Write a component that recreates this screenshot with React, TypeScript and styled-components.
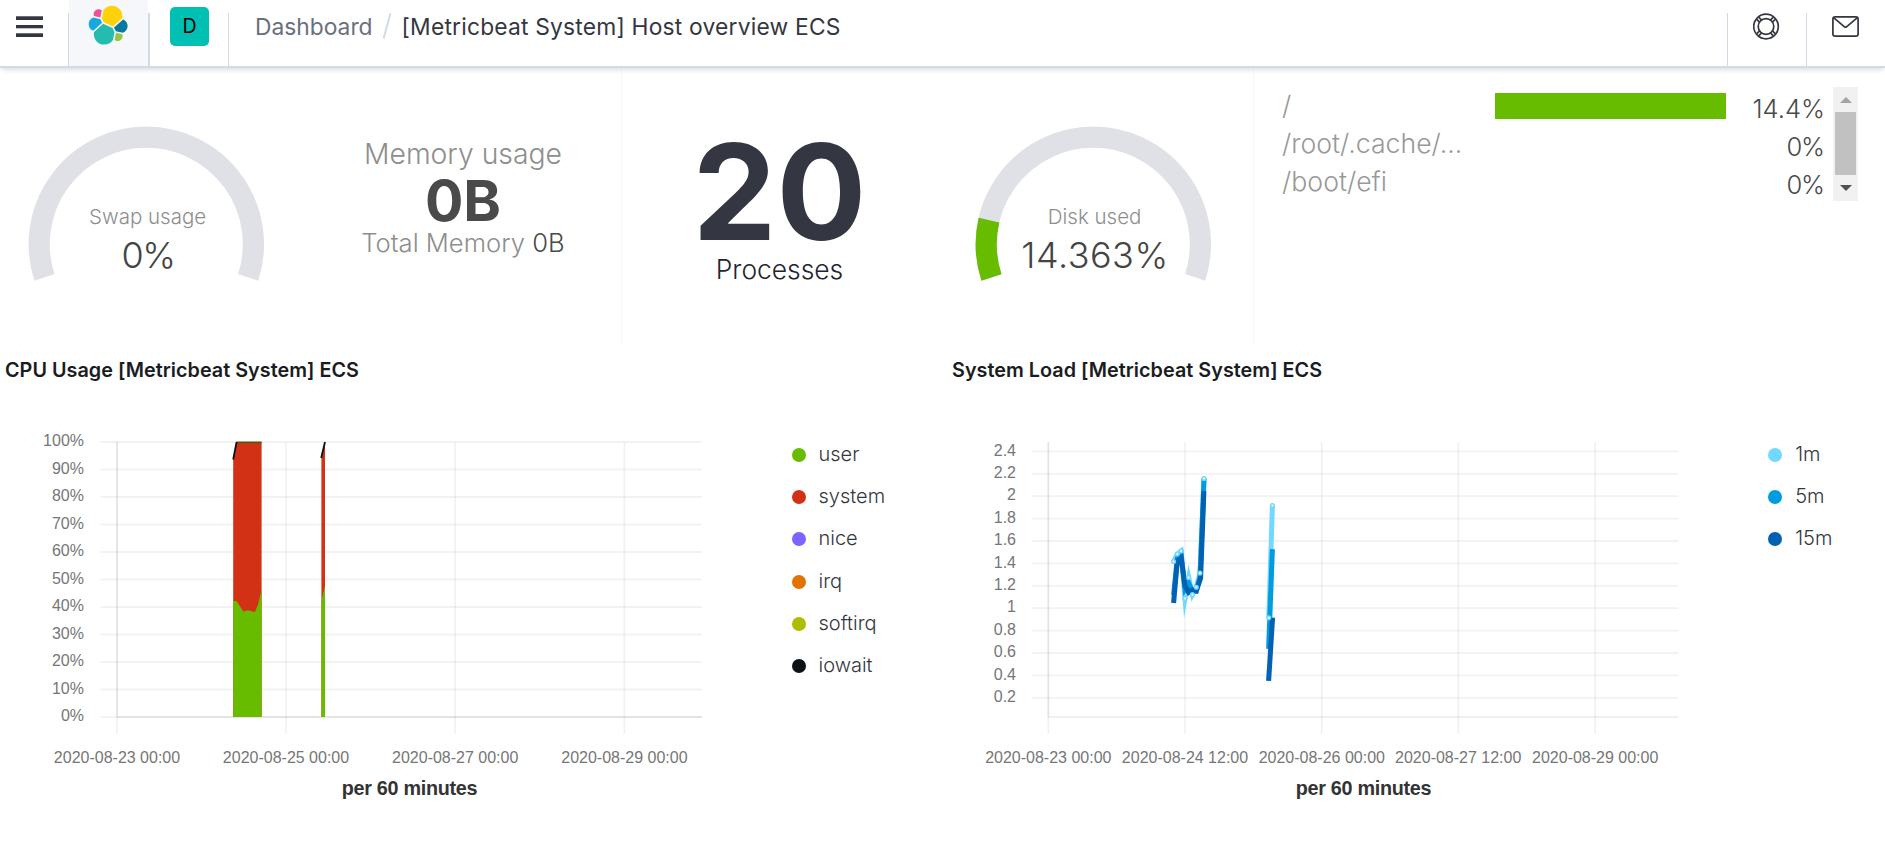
import React from 'react';
import styled, { createGlobalStyle } from 'styled-components';

const INTER = 'Inter, "Liberation Sans", sans-serif';
const ARIAL = '"Liberation Sans", Arial, sans-serif';

const GlobalStyle = createGlobalStyle`
  * { box-sizing: border-box; }
  body { margin: 0; background: #fff; overflow: hidden; font-family: ${INTER}; color: #343741; }
  svg { display: block; }
`;

const Page = styled.div`
  width: 1885px;
  height: 844px;
  display: flex;
  flex-direction: column;
  overflow: hidden;
`;

/* ---------- header ---------- */

const Header = styled.header`
  position: relative;
  z-index: 1;
  display: flex;
  flex: none;
  height: 68px;
  border-bottom: 2px solid #d3dae6;
  box-shadow: 0 2px 4px -1px rgba(152, 162, 179, 0.25), 0 5px 6px -3px rgba(152, 162, 179, 0.2);
  background: #fff;
`;

const HeaderCell = styled.div<{ $width: number; $top: number; $left: number; $tint?: boolean }>`
  width: ${(p) => p.$width}px;
  padding: ${(p) => p.$top}px 0 0 ${(p) => p.$left}px;
  background: ${(p) => (p.$tint ? '#f5f7fa' : 'transparent')};
`;

const HeaderRule = styled.div<{ $width?: number }>`
  width: ${(p) => p.$width ?? 1}px;
  margin-top: 13px;
  background: #d3dae6;
`;

const MenuButton = styled.div`
  display: flex;
  flex-direction: column;
  justify-content: space-between;
  width: 27px;
  height: 21px;
`;

const MenuBar = styled.span<{ $soft?: boolean }>`
  height: 4px;
  background: #343741;
  border-top: ${(p) => (p.$soft ? '0' : '1px solid #6c6e76')};
  border-bottom: ${(p) => (p.$soft ? '1px solid #c2c3c6' : '0')};
`;

const SpaceAvatar = styled.div`
  display: flex;
  align-items: center;
  justify-content: center;
  width: 39px;
  height: 39px;
  border-radius: 5px;
  background: #00bfb3;
  color: #000;
  font-size: 19.5px;
  line-height: 39px;
`;

const Breadcrumbs = styled.nav`
  display: flex;
  flex: 1;
  padding: 9px 0 0 26px;
  font-size: 22.8px;
  line-height: 36px;
  white-space: nowrap;
`;

const Crumb = styled.span<{ $current?: boolean }>`
  color: ${(p) => (p.$current ? '#343741' : '#69707d')};
  letter-spacing: ${(p) => (p.$current ? 0.2 : 0)}px;
`;

const CrumbSlash = styled.span`
  width: 2px;
  height: 26px;
  margin: 4px 14px 0 13px;
  background: #d3dae6;
  transform: rotate(15deg);
`;

/* ---------- metric row ---------- */

const MetricRow = styled.section`
  display: grid;
  flex: none;
  grid-template-columns: 305px 316px 316px 316px 1fr;
  height: 278px;
`;

const MetricPanel = styled.div<{ $top: number; $right?: number; $rule?: boolean }>`
  display: flex;
  flex-direction: column;
  align-items: center;
  padding: ${(p) => p.$top}px ${(p) => p.$right ?? 0}px 0 0;
  border-left: ${(p) => (p.$rule ? '1px solid #f8f9fb' : '0')};
  white-space: nowrap;
`;

const MetricLabel = styled.div<{ $size: number }>`
  font-size: ${(p) => p.$size}px;
  font-weight: 300;
  line-height: 34px;
  color: #8e8e8e;
`;

const MetricValue = styled.div`
  font-size: 57px;
  font-weight: 700;
  line-height: 55px;
  padding-top: 2px;
  margin-bottom: -2px;
  color: #4a4a4a;
`;

const Strong = styled.span`
  color: #4a4a4a;
`;

const BigNumber = styled.div`
  font-size: 133.3px;
  font-weight: 700;
  line-height: 134px;
  color: #343741;
`;

const BigCaption = styled.div`
  margin-top: -7px;
  font-size: 26.4px;
  font-weight: 300;
  line-height: 34px;
  color: #22252c;
`;

const TopList = styled.div`
  display: flex;
  padding: 19px 27px 0 28px;
  border-left: 1px solid #f8f9fb;
`;

const TopRows = styled.div`
  flex: 1;
`;

const TopRow = styled.div`
  display: grid;
  grid-template-columns: 213px 231px 1fr;
  height: 38px;
  font-size: 26.67px;
  font-weight: 300;
`;

const TopName = styled.span`
  line-height: 36px;
  color: #999;
  white-space: nowrap;
`;

const TopBar = styled.span<{ $filled: boolean }>`
  height: 26px;
  margin-top: 6px;
  background: ${(p) => (p.$filled ? '#68bc00' : 'transparent')};
`;

const TopValue = styled.span<{ $tight: boolean }>`
  font-size: 25.6px;
  line-height: 44px;
  letter-spacing: ${(p) => (p.$tight ? -1.2 : 0)}px;
  padding-right: ${(p) => (p.$tight ? 9.2 : 8)}px;
  text-align: right;
  color: #4a4a4a;
`;

const ScrollTrack = styled.div`
  display: flex;
  flex-direction: column;
  align-items: center;
  width: 25px;
  height: 114px;
  background: #f1f1f1;
`;

const ScrollArrow = styled.div<{ $down?: boolean }>`
  width: 0;
  height: 0;
  margin: ${(p) => (p.$down ? '10px 0 0' : '10px 0 9px')};
  border-left: 6px solid transparent;
  border-right: 6px solid transparent;
  border-top: ${(p) => (p.$down ? '6px solid #505050' : '0')};
  border-bottom: ${(p) => (p.$down ? '0' : '6px solid #a3a3a3')};
`;

const ScrollThumb = styled.div`
  width: 21px;
  height: 63px;
  background: #c1c1c1;
`;

/* ---------- chart row ---------- */

const ChartRow = styled.section`
  display: grid;
  grid-template-columns: 947px 1fr;
  flex: 1;
`;

const ChartPanel = styled.article`
  display: flex;
  flex-direction: column;
`;

const ChartTitle = styled.h2`
  margin: 0;
  padding: 9px 0 0 5px;
  font-size: 19.8px;
  font-weight: 600;
  line-height: 30px;
  letter-spacing: 0.03px;
  color: #1a1c21;
  white-space: nowrap;
`;

const ChartBody = styled.div`
  display: flex;
`;

const Legend = styled.ul<{ $gap: number }>`
  margin: 0;
  padding: 49px 0 0 ${(p) => p.$gap}px;
  list-style: none;
`;

const LegendItem = styled.li`
  display: flex;
  align-items: center;
  height: 42.2px;
  font-size: 20px;
  font-weight: 300;
  color: #343741;
  white-space: nowrap;
`;

const LegendDot = styled.span<{ $color: string }>`
  width: 14px;
  height: 14px;
  margin-right: 13px;
  border-radius: 50%;
  background: ${(p) => p.$color};
`;

const LegendText = styled.span`
  padding-bottom: 2px;
`;

const AxisText = styled.text`
  font-family: ${ARIAL};
  font-size: 16px;
  fill: #767676;
`;

const AxisTitle = styled.text`
  font-family: ${ARIAL};
  font-size: 19.8px;
  font-weight: 700;
  letter-spacing: -0.3px;
  fill: #333;
`;

const GaugeLabel = styled.text`
  font-family: ${INTER};
  font-size: 20.5px;
  font-weight: 300;
  fill: #8e8e8e;
`;

const GaugeValue = styled.text<{ $spacing: number }>`
  font-family: ${INTER};
  font-size: 36px;
  font-weight: 300;
  letter-spacing: ${(p) => p.$spacing}px;
  fill: #444;
`;

/* ---------- icons ---------- */

const ElasticLogo = () => (
  <svg width="42.3" height="42.3" viewBox="0 0 32 32">
    <path fill="#FED10A" d="M12.58 13.787l7.002 3.211 7.066-6.213c.103-.513.152-1.03.152-1.556a7.87 7.87 0 00-7.847-7.879 7.838 7.838 0 00-6.476 3.43l-1.176 6.115 1.279 2.892z" />
    <path fill="#24BBB1" d="M5.333 21.228A8.018 8.018 0 005.18 22.8c0 4.368 3.541 7.922 7.894 7.922 2.623 0 5.079-1.307 6.552-3.49l1.167-6.11-1.557-2.992-7.027-3.216-6.876 6.314z" />
    <path fill="#EF5098" d="M5.288 9.067l4.8 1.137L11.14 4.73a3.82 3.82 0 00-2.3-.77c-2.09 0-3.79 1.707-3.79 3.804 0 .46.08.903.238 1.303z" />
    <path fill="#17A8E0" d="M4.872 10.214c-2.145.713-3.605 2.768-3.605 5.04 0 2.21 1.364 4.184 3.411 4.966l6.734-6.115-1.236-2.654-5.304-1.237z" />
    <path fill="#93C83E" d="M20.873 27.228a3.8 3.8 0 002.292.774c2.09 0 3.79-1.706 3.79-3.803 0-.461-.08-.904-.238-1.304l-4.796-1.127-1.048 5.46z" />
    <path fill="#0779A1" d="M21.848 20.528l5.28 1.24c2.145-.713 3.606-2.767 3.606-5.041 0-2.206-1.367-4.178-3.416-4.959l-6.905 6.082 1.435 2.678z" />
  </svg>
);

const HelpIcon = () => (
  <svg width="27" height="27" viewBox="0 0 27 27" fill="none" stroke="#343741" strokeWidth="1.7">
    <circle cx="13" cy="13.5" r="12.3" />
    <circle cx="13" cy="13.5" r="7.8" />
    <g strokeWidth="1.7">
      <path d="M3.8 6.4l3 3M5.9 4.3l3 3M20.1 4.3l-3 3M22.2 6.4l-3 3M3.8 20.6l3-3M5.9 22.7l3-3M20.1 22.7l-3-3M22.2 20.6l-3-3" />
    </g>
  </svg>
);

const MailIcon = () => (
  <svg width="27" height="21" viewBox="0 0 27 21" fill="none" stroke="#343741" strokeWidth="1.7">
    <rect x="0.9" y="0.9" width="25.2" height="19.2" rx="2.2" />
    <path d="M1.6 1.6l10.9 9.2q1 .8 2 0L25.4 1.6" />
  </svg>
);

/* ---------- gauge ---------- */

const SWEEP = 216;
const point = (angle: number, r: number) => {
  const a = (angle * Math.PI) / 180;
  return `${(120.3 + r * Math.cos(a)).toFixed(2)} ${(120.3 + r * Math.sin(a)).toFixed(2)}`;
};
const arc = (from: number, to: number) =>
  `M${point(from, 107.1)}A107.1 107.1 0 ${to - from > 180 ? 1 : 0} 1 ${point(to, 107.1)}`;

type GaugeProps = { label: string; value: string; ratio: number; spacing: number };

const Gauge = ({ label, value, ratio, spacing }: GaugeProps) => (
  <svg width="240" height="164" viewBox="0 0 240 164" fill="none" strokeWidth="21.2">
    <path d={arc(162, 162 + SWEEP)} stroke="#e0e1e6" />
    {ratio > 0 && <path d={arc(162, 162 + SWEEP * ratio)} stroke="#68bc00" />}
    <GaugeLabel x="121.6" y="100" textAnchor="middle">{label}</GaugeLabel>
    <GaugeValue $spacing={spacing} x="122" y="143.6" textAnchor="middle">{value}</GaugeValue>
  </svg>
);

/* ---------- charts ---------- */

type Tick = { at: number; label: string };
type ChartFrameProps = {
  width: number;
  left: number;
  right: number;
  labelRight: number;
  yTicks: Tick[];
  xTicks: Tick[];
  titleX: number;
  children: React.ReactNode;
};

const TOP = 57;
const BOTTOM = 332;

const ChartFrame = ({ width, left, right, labelRight, yTicks, xTicks, titleX, children }: ChartFrameProps) => (
  <svg width={width} height="440" viewBox={`0 0 ${width} 440`}>
    <g stroke="#000" strokeOpacity="0.05" strokeWidth="1.8">
      {yTicks.map((t) => (
        <path key={t.label} d={`M${left - 16.5} ${t.at}H${right}`} />
      ))}
      {xTicks.map((t) => (
        <path key={t.label} d={`M${t.at} ${TOP}V349`} />
      ))}
    </g>
    <g stroke="#000" strokeOpacity="0.06" strokeWidth="1.8">
      <path d={`M${left} ${TOP}V${BOTTOM}`} />
      <path d={`M${left} ${BOTTOM}H${right}`} />
    </g>
    {children}
    {yTicks.map((t) => (
      <AxisText key={t.label} x={labelRight} y={t.at + 4.2} textAnchor="end">{t.label}</AxisText>
    ))}
    {xTicks.map((t) => (
      <AxisText key={t.label} x={t.at} y="377.7" textAnchor="middle">{t.label}</AxisText>
    ))}
    <AxisTitle x={titleX} y="409.7" textAnchor="middle">per 60 minutes</AxisTitle>
  </svg>
);

const cpuY: Tick[] = Array.from({ length: 11 }, (_, i) => ({ at: TOP + i * 27.5, label: `${100 - i * 10}%` }));
const cpuX: Tick[] = [
  { at: 117, label: '2020-08-23 00:00' },
  { at: 286, label: '2020-08-25 00:00' },
  { at: 455.2, label: '2020-08-27 00:00' },
  { at: 624.4, label: '2020-08-29 00:00' },
];

const loadY: Tick[] = ['2.4', '2.2', '2', '1.8', '1.6', '1.4', '1.2', '1', '0.8', '0.6', '0.4', '0.2'].map(
  (label, i) => ({ at: 66.4 + i * 22.4, label }),
);
const loadX: Tick[] = [
  { at: 101.3, label: '2020-08-23 00:00' },
  { at: 238, label: '2020-08-24 12:00' },
  { at: 374.8, label: '2020-08-26 00:00' },
  { at: 511.2, label: '2020-08-27 12:00' },
  { at: 648.2, label: '2020-08-29 00:00' },
];

const oneMinute = [
  [226.6, 176.5], [230.3, 169], [234.1, 166], [238, 213.5], [241.7, 192.5],
  [245.4, 209.6], [249.3, 202.2], [253, 188.1], [257, 93.5],
];
const oneMinuteTail = [[321.8, 232.8], [325.4, 120.5]];
const path = (pts: number[][]) => `M${pts.map((p) => p.join(' ')).join('L')}`;

const cpuLegend: [string, string][] = [
  ['user', '#68bc00'],
  ['system', '#d33115'],
  ['nice', '#7b64ff'],
  ['irq', '#e27300'],
  ['softirq', '#b0bc00'],
  ['iowait', '#0c1216'],
];
const loadLegend: [string, string][] = [
  ['1m', '#73d8ff'],
  ['5m', '#009ce0'],
  ['15m', '#0062b1'],
];

const ChartLegend = ({ items, gap }: { items: [string, string][]; gap: number }) => (
  <Legend $gap={gap}>
    {items.map(([name, color]) => (
      <LegendItem key={name}>
        <LegendDot $color={color} />
        <LegendText>{name}</LegendText>
      </LegendItem>
    ))}
  </Legend>
);

const mounts = [
  { name: '/', value: '14.4%', filled: true },
  { name: '/root/.cache/...', value: '0%', filled: false },
  { name: '/boot/efi', value: '0%', filled: false },
];

export default function App() {
  return (
    <Page>
      <GlobalStyle />
      <Header>
        <HeaderCell $width={68} $top={16} $left={16}>
          <MenuButton>
            <MenuBar />
            <MenuBar $soft />
            <MenuBar />
          </MenuButton>
        </HeaderCell>
        <HeaderRule />
        <HeaderCell $width={79} $top={3.8} $left={18.3} $tint>
          <ElasticLogo />
        </HeaderCell>
        <HeaderRule $width={2} />
        <HeaderCell $width={78} $top={7} $left={20}>
          <SpaceAvatar>D</SpaceAvatar>
        </HeaderCell>
        <HeaderRule />
        <Breadcrumbs>
          <Crumb>Dashboard</Crumb>
          <CrumbSlash />
          <Crumb $current>[Metricbeat System] Host overview ECS</Crumb>
        </Breadcrumbs>
        <HeaderRule />
        <HeaderCell $width={78} $top={13} $left={25}>
          <HelpIcon />
        </HeaderCell>
        <HeaderRule />
        <HeaderCell $width={78} $top={16} $left={25}>
          <MailIcon />
        </HeaderCell>
      </Header>

      <MetricRow>
        <MetricPanel $top={56} $right={13}>
          <Gauge label="Swap usage" value="0%" ratio={0} spacing={-1.4} />
        </MetricPanel>
        <MetricPanel $top={69}>
          <MetricLabel $size={28.3}>Memory usage</MetricLabel>
          <MetricValue>0B</MetricValue>
          <MetricLabel $size={25.6}>
            Total Memory <Strong>0B</Strong>
          </MetricLabel>
        </MetricPanel>
        <MetricPanel $top={57} $rule>
          <BigNumber>20</BigNumber>
          <BigCaption>Processes</BigCaption>
        </MetricPanel>
        <MetricPanel $top={56} $right={4}>
          <Gauge label="Disk used" value="14.363%" ratio={0.14363} spacing={0.5} />
        </MetricPanel>
        <TopList>
          <TopRows>
            {mounts.map((m) => (
              <TopRow key={m.name}>
                <TopName>{m.name}</TopName>
                <TopBar $filled={m.filled} />
                <TopValue $tight={!m.filled}>{m.value}</TopValue>
              </TopRow>
            ))}
          </TopRows>
          <ScrollTrack>
            <ScrollArrow />
            <ScrollThumb />
            <ScrollArrow $down />
          </ScrollTrack>
        </TopList>
      </MetricRow>

      <ChartRow>
        <ChartPanel>
          <ChartTitle>CPU Usage [Metricbeat System] ECS</ChartTitle>
          <ChartBody>
            <ChartFrame width={720} left={117} right={702} labelRight={84} yTicks={cpuY} xTicks={cpuX} titleX={409.5}>
              <path fill="#d33115" d="M233.2 74L236.6 57H261.6V332H233.2Z" />
              <path fill="#68bc00" d="M233.2 216H236.6L243.3 226.5L248 225.3L254.8 227L258 220L261.7 204V332H233.2Z" />
              <path fill="none" stroke="#5a5410" strokeWidth="1.8" d="M236.6 57.4H261.6" />
              <path fill="none" stroke="#0c1216" strokeWidth="1.8" d="M233.2 74.5L236.6 57" />
              <path fill="#d33115" d="M321.4 73L325 58V332H321.4Z" />
              <path fill="#68bc00" d="M321.4 216L325 200.5V332H321.4Z" />
              <path fill="none" stroke="#0c1216" strokeWidth="1.8" d="M321.2 73L325 57" />
            </ChartFrame>
            <ChartLegend items={cpuLegend} gap={71.5} />
          </ChartBody>
        </ChartPanel>
        <ChartPanel>
          <ChartTitle>System Load [Metricbeat System] ECS</ChartTitle>
          <ChartBody>
            <ChartFrame width={760} left={101.3} right={731.5} labelRight={69} yTicks={loadY} xTicks={loadX} titleX={416.5}>
              <g fill="none" strokeWidth="5" strokeLinejoin="miter" strokeMiterlimit="10">
                <path stroke="#73d8ff" d={path(oneMinute)} />
                <path stroke="#73d8ff" d={path(oneMinuteTail)} />
                <path stroke="#009ce0" d="M226.6 210L230.3 173L234.1 169L238 204L241.7 198L245.4 206.5L249.3 206L253 192L257 93.8" />
                <path stroke="#009ce0" d="M321.6 263.8L325.4 164.2" />
                <path stroke="#0062b1" d="M226.6 218L230.3 176L234.1 172.5L238 201L241.7 207.5L245.4 205L249.3 206L253.6 193L256.9 106.2" />
                <path stroke="#0062b1" d="M321.6 295.8L325.6 232.6" />
              </g>
              <g fill="#fff" stroke="#73d8ff" strokeWidth="1.5">
                {[...oneMinute, ...oneMinuteTail].map(([x, y]) => (
                  <circle key={x} cx={x} cy={y} r="1.8" />
                ))}
              </g>
            </ChartFrame>
            <ChartLegend items={loadLegend} gap={61.2} />
          </ChartBody>
        </ChartPanel>
      </ChartRow>
    </Page>
  );
}
